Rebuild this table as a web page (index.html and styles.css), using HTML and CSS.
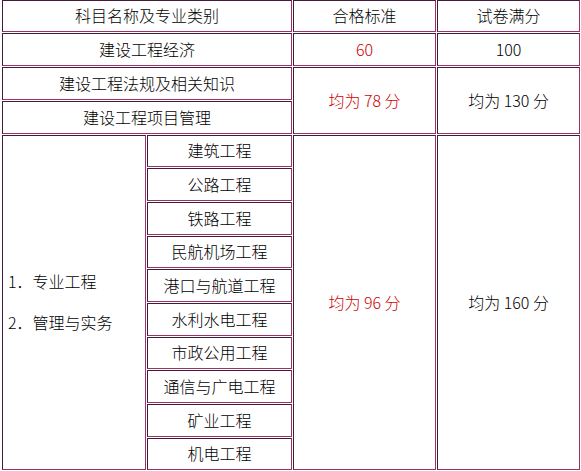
FILE: index.html
```html
<!DOCTYPE html>
<html lang="zh-CN">
<head>
<meta charset="utf-8">
<title>合格标准</title>
<link rel="stylesheet" href="styles.css">
</head>
<body>
<table class="grid">
  <colgroup>
    <col class="c-a">
    <col class="c-b">
    <col class="c-c">
    <col class="c-d">
  </colgroup>
  <tr class="r-head">
    <td colspan="2">科目名称及专业类别</td>
    <td>合格标准</td>
    <td>试卷满分</td>
  </tr>
  <tr class="r33">
    <td colspan="2">建设工程经济</td>
    <td class="red">60</td>
    <td>100</td>
  </tr>
  <tr class="r33">
    <td colspan="2">建设工程法规及相关知识</td>
    <td rowspan="2" class="red">均为 78 分</td>
    <td rowspan="2">均为 130 分</td>
  </tr>
  <tr class="r33">
    <td colspan="2">建设工程项目管理</td>
  </tr>
  <tr class="r32">
    <td rowspan="10" class="left">
      <div class="stack">
        <span>1．专业工程</span>
        <span>2．管理与实务</span>
      </div>
    </td>
    <td>建筑工程</td>
    <td rowspan="10" class="red">均为 96 分</td>
    <td rowspan="10">均为 160 分</td>
  </tr>
  <tr class="r33"><td>公路工程</td></tr>
  <tr class="r33"><td>铁路工程</td></tr>
  <tr class="r32"><td>民航机场工程</td></tr>
  <tr class="r33"><td>港口与航道工程</td></tr>
  <tr class="r33"><td>水利水电工程</td></tr>
  <tr class="r32"><td>市政公用工程</td></tr>
  <tr class="r33"><td>通信与广电工程</td></tr>
  <tr class="r33"><td>矿业工程</td></tr>
  <tr class="r32"><td>机电工程</td></tr>
</table>
</body>
</html>
```

FILE: styles.css
```css
html, body {
  margin: 0;
  padding: 0;
  background: #ffffff;
}

body {
  font-family: "Noto Sans CJK SC", "Noto Sans", sans-serif;
  font-weight: 300;
  font-size: 16px;
  color: #000000;
}

.grid {
  margin: -1px 0 0 1px;
  width: 580px;
  table-layout: fixed;
  border-collapse: separate;
  border-spacing: 1px;
}

.c-a { width: 144px; }
.c-b { width: 145px; }
.c-c { width: 143px; }
.c-d { width: 143px; }

.grid td {
  box-sizing: border-box;
  padding: 0 0 2px 0;
  border-style: solid;
  border-width: 1px;
  border-color: #45193a #993366 #993366 #45193a;
  text-align: center;
  vertical-align: middle;
  line-height: 20px;
  white-space: nowrap;
}

.r-head { height: 32px; }
.r33 { height: 33px; }
.r32 { height: 32px; }

.grid td.red {
  color: #cc0000;
}

.grid td.left {
  text-align: left;
  padding-left: 5px;
}

.stack {
  display: flex;
  flex-direction: column;
  gap: 21px;
}
```
